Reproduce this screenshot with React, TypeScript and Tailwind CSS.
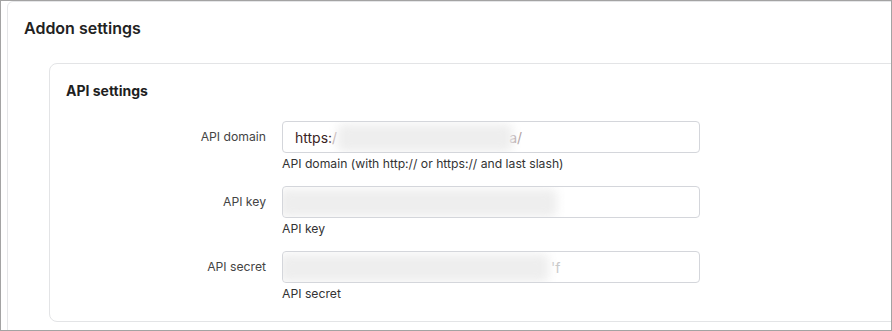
import React from 'react';

interface FieldProps {
  label: string;
  help: string;
  children: React.ReactNode;
}

const Field: React.FC<FieldProps> = ({ label, help, children }) => (
  <div className="flex items-start">
    <label className="w-[232px] shrink-0 pr-[16px] pt-[8px] text-right text-[12.2px] leading-[16px] text-[#444]">
      {label}
    </label>
    <div className="w-[418px]">
      <div className="relative h-[32px] overflow-hidden rounded-[4px] border border-[#d4d6db] bg-white">
        {children}
      </div>
      <p className="mt-[3px] text-[12.2px] leading-[16px] text-[#333]">{help}</p>
    </div>
  </div>
);

const Blur: React.FC<{ left: number; width: number }> = ({ left, width }) => (
  <div
    className="absolute top-[2px] h-[28px] rounded-[6px] bg-[#eeeeee] blur-[5px]"
    style={{ left, width }}
  />
);

export default function App() {
  return (
    <div className="h-[331px] w-[892px] overflow-hidden border border-[#a3a3a3] bg-white font-['Inter','Liberation_Sans',sans-serif]">
      <div className="ml-[6px] h-[340px] w-[900px] rounded-[6px] border border-[#e5e6e8] bg-white">
        <h1 className="pl-[16px] pt-[15px] text-[16px] leading-[22px] font-semibold text-[#222]">Addon settings</h1>
        <div className="ml-[41px] mt-[24px] h-[259px] w-[900px] rounded-[8px] border border-[#e3e4e6] bg-white">
          <h2 className="pl-[16px] pt-[18px] text-[14px] leading-[18px] font-bold text-[#1f1f1f]">API settings</h2>
          <div className="mt-[21px] flex flex-col gap-[14px]">
            <Field label="API domain" help="API domain (with http:// or https:// and last slash)">
              <div className="flex h-full items-center pl-[12px] text-[14px] text-[#3a2323]">
                <span>https:</span>
                <span className="text-[#b9a9a9]">/</span>
                <span className="w-[172px]" />
                <span className="text-[#b0a0a0]">a/</span>
              </div>
              <Blur left={54} width={176} />
            </Field>
            <Field label="API key" help="API key">
              <div className="flex h-full items-center pl-[13px] text-[14px] text-[#e6c6c6]">(</div>
              <Blur left={-4} width={278} />
            </Field>
            <Field label="API secret" help="API secret">
              <div className="flex h-full items-center pl-[268px] text-[14px] text-[#c8c8c8]">'f</div>
              <Blur left={-4} width={270} />
            </Field>
          </div>
        </div>
      </div>
    </div>
  );
}
